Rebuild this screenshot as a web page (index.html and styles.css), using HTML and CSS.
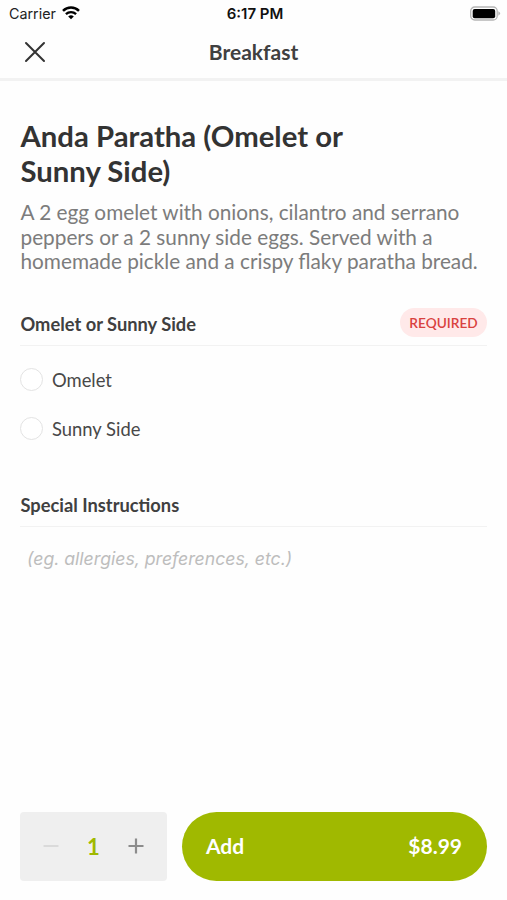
FILE: index.html
```html
<!DOCTYPE html>
<html lang="en">
<head>
<meta charset="utf-8">
<title>Breakfast</title>
<link rel="stylesheet" href="styles.css">
</head>
<body>
<div class="screen">
  <div class="status">
    <div class="carrier"><span>Carrier</span>
      <svg class="wifi" width="18" height="14" viewBox="0 0 18 14" fill="none" stroke="#000"><path d="M1 4.900C5.500.5 12.500.5 17 4.900" stroke-width="2.500"/><path d="M3.900 8.200C6.800 5.400 11.200 5.400 14.100 8.200" stroke-width="2.300"/><path d="M9 13.200L6.200 10.400Q9 8.200 11.800 10.400Z" fill="#000" stroke="none"/></svg>
    </div>
    <div class="time">6:17 PM</div>
    <svg class="battery" width="32" height="16" viewBox="0 0 32 16"><rect x="1.700" y="1" width="26.500" height="13" rx="4" fill="#fff" stroke="#b5b5b5" stroke-width="1.300"/><rect x="3.700" y="3" width="22.500" height="9.300" rx="2" fill="#000"/><path d="M29.300 5.300Q33 7.500 29.300 9.700Z" fill="#b5b5b5"/></svg>
  </div>
  <header class="header">
    <svg class="close" width="22" height="22" viewBox="0 0 22 22" stroke="#333" stroke-width="2" stroke-linecap="round"><path d="M2 2L20 20M20 2L2 20"/></svg>
    <div class="title">Breakfast</div>
    <div></div>
  </header>
  <main class="content">
    <h1>Anda Paratha (Omelet or<br>Sunny Side)</h1>
    <p class="description">A 2 egg omelet with onions, cilantro and serrano<br>peppers or a 2 sunny side eggs. Served with a<br>homemade pickle and a crispy flaky paratha bread.</p>
    <section>
      <div class="section-head"><h2>Omelet or Sunny Side</h2><span class="badge">REQUIRED</span></div>
      <div class="option"><i class="radio"></i><span>Omelet</span></div>
      <div class="option"><i class="radio"></i><span>Sunny Side</span></div>
    </section>
    <section class="special">
      <div class="section-head"><h2>Special Instructions</h2></div>
      <div class="placeholder">(eg. allergies, preferences, etc.)</div>
    </section>
  </main>
  <footer class="footer">
    <div class="stepper">
      <svg width="16" height="16" viewBox="0 0 16 16" stroke="#dadada" stroke-width="2"><path d="M0.500 8H15.500"/></svg>
      <span class="count">1</span>
      <svg width="16" height="16" viewBox="0 0 16 16" stroke="#8c8c8c" stroke-width="2.200"><path d="M0.500 8H15.500M8 0.500V15.500"/></svg>
    </div>
    <div class="add"><span>Add</span><span class="price">$8.99</span></div>
  </footer>
</div>
</body>
</html>
```
FILE: styles.css
```css
* { box-sizing: border-box; }
body { margin: 0; background: #fefefe; font-family: Lato, sans-serif; color: #333; }
.screen { width: 507px; height: 900px; display: flex; flex-direction: column; overflow: hidden; background: #fefefe; }
.status { height: 27px; flex: none; display: grid; grid-template-columns: 1fr auto 1fr; align-items: center; padding: 0 6px 0 9px; font-family: Inter, sans-serif; font-size: 14.300px; color: #222; }
.carrier { display: flex; align-items: center; gap: 6px; }
.wifi { margin-top: -1px; }
.time { font-size: 15px; font-weight: 600; color: #111; }
.battery { justify-self: end; }
.header { height: 54px; flex: none; display: grid; grid-template-columns: 1fr auto 1fr; align-items: center; padding: 0 24px 1px; border-bottom: 3px solid #f2f2f2; }
.title { padding-bottom: 2px; font-size: 21px; font-weight: 700; color: #404040; }
.content { flex: 1; padding: 37px 20px 0; }
h1, h2, p { margin: 0; }
h1 { margin-left: 0.500px; font-size: 29.300px; line-height: 35px; font-weight: 700; white-space: nowrap; }
.description { margin: 12px 0 0 0.500px; font-size: 20.780px; line-height: 24.700px; color: #7c7c7c; white-space: nowrap; }
.section-head { display: flex; align-items: center; justify-content: space-between; height: 43px; border-bottom: 1.500px solid #f2f2f2; }
section { margin-top: 28.800px; }
h2 { margin-left: 0.500px; font-size: 18.300px; line-height: 22px; font-weight: 700; color: #404040; }
.badge { width: 87px; height: 29px; margin-bottom: 3px; border-radius: 15px; background: #ffe9e9; color: #d9423f; font-size: 13.700px; font-weight: 600; display: flex; align-items: center; justify-content: center; }
.option { display: flex; align-items: center; height: 49px; gap: 10px; font-size: 18.400px; color: #484848; }
.section-head + .option { margin-top: 9.500px; }
.radio { width: 23px; height: 23px; margin-right: -1px; border-radius: 50%; border: 1.500px solid #e3e3e3; background: #fff; }
.special { margin-top: 31px; }
.placeholder { margin: 20px 0 0 7px; font-family: Inter, sans-serif; font-style: italic; font-size: 17.650px; line-height: 24px; color: #bdbdbd; }
.footer { height: 107px; flex: none; padding: 19px 20px; display: flex; gap: 15px; }
.stepper { width: 147px; height: 69px; border-radius: 4px; background: #efefef; display: flex; align-items: center; justify-content: space-between; padding: 0 23px 1px; }
.count { font-size: 22px; font-weight: 700; color: #a0b900; }
.add { flex: 1; height: 69px; border-radius: 35px; background: #a0b900; color: #fff; display: flex; align-items: center; justify-content: space-between; padding: 0 25px 2px 24px; font-size: 21px; font-weight: 700; }
```
